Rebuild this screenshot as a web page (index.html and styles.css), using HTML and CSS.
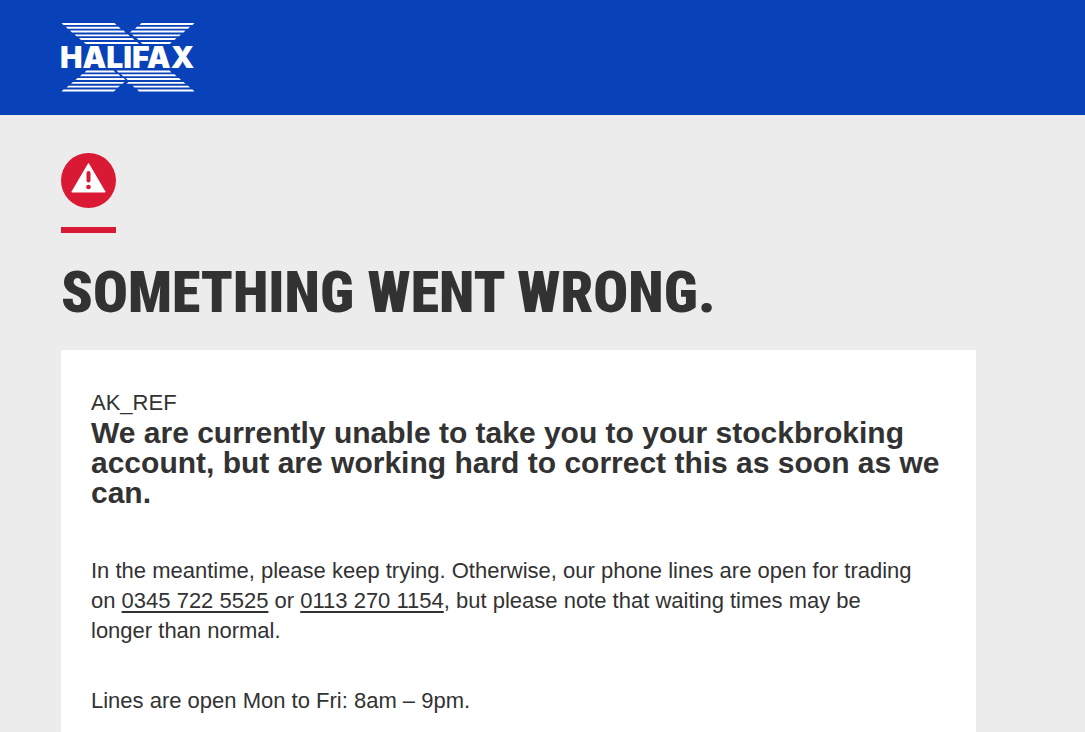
FILE: index.html
```html
<!DOCTYPE html>
<html lang="en">
<head>
    <meta charset="UTF-8">
    <meta name="viewport" content="width=device-width, initial-scale=1.0">
    <title>Halifax - Something went wrong</title>
    <link rel="stylesheet" href="styles.css">
</head>
<body>
    <header class="header">
        <svg class="logo" viewBox="0 0 134 71" role="img" aria-label="Halifax">
            <!-- upper left -->
            <path d="M0.5 1h53l2 1.9h-53zM4.7 4.8h53l2 1.9h-53zM9 8.6h53.5l2 1.9H11zM13.5 12.4H67l2 1.9H15.5zM18 16.1h53.5l2 1.9H20zM22.7 20h53.3l2 1.9H24.7z"/>
            <!-- upper right -->
            <path d="M80.5 1h53l-2 1.9h-53zM76 4.8h53l-2 1.9H74zM71 8.6h53.5l-2 1.9H69zM71 12.4h49l-2 1.9H73zM75.5 16.1h40l-2 1.9h-36zM79.5 20h31.3l-2 1.9H81.5z"/>
            <!-- lower left -->
            <path d="M25.5 48.5h27l2 1.9h-31zM21 52.3h36.5l2 1.9H19zM16.5 56.1h46l2 1.9H14.5zM12 59.9h51.5l-2 1.9H10zM7.5 63.7H59l-2 1.9H5.5zM2.5 67.6h52.5l-2 1.9H0.5z"/>
            <!-- lower right -->
            <path d="M55.5 48.5h53l2 1.9h-53zM60 52.3h53.5l2 1.9H62zM64.7 56.1H118l2 1.9H66.7zM67.5 59.9h55l2 1.9h-59zM71.5 63.7H127l2 1.9H73.5zM76 67.6h55.5l2 1.9H78z"/>
            <text class="logo-text" x="-1" y="46">HALIFAX</text>
        </svg>
    </header>

    <main class="content">
        <svg class="alert-icon" viewBox="0 0 55 55" aria-hidden="true">
            <circle cx="27.5" cy="27.5" r="27.5" fill="#da1a35"/>
            <path d="M27.5 10.5L44.2 39H10.8z" fill="#fff" stroke="#fff" stroke-width="1" stroke-linejoin="round"/>
            <path d="M27.5 20v7.5" stroke="#da1a35" stroke-width="4" stroke-linecap="round"/>
            <circle cx="27.5" cy="34" r="2.3" fill="#da1a35"/>
        </svg>
        <div class="red-line"></div>
        <h1>Something went wrong.</h1>

        <div class="panel">
            <p>AK_REF</p>
            <h2>We are currently unable to take you to your stockbroking account, but are working hard to correct this as soon as we can.</h2>
            <p class="message">In the meantime, please keep trying. Otherwise, our phone lines are open for trading on <a href="tel:03457225525">0345 722 5525</a> or <a href="tel:01132701154">0113 270 1154</a>, but please note that waiting times may be longer than normal.</p>
            <p class="message">Lines are open Mon to Fri: 8am – 9pm.</p>
        </div>
    </main>
</body>
</html>
```

FILE: styles.css
```css
* {
    box-sizing: border-box;
}
body {
    margin: 0;
    background-color: #ececec;
    color: #323233;
    font-family: "Liberation Sans", Arial, sans-serif;
    font-size: 22px;
    line-height: 30px;
}
.header {
    background-color: #0841b8;
    padding: 22px 61px;
}
.logo {
    display: block;
    width: 134px;
    height: 71px;
    fill: white;
    overflow: visible;
}
.logo-text {
    font-family: Inter, sans-serif;
    font-size: 30px;
    font-weight: 900;
}
.content {
    padding: 38px 109px 0 61px;
}
.alert-icon {
    display: block;
    width: 55px;
    height: 55px;
}
.red-line {
    width: 55px;
    height: 6px;
    margin-top: 19px;
    background-color: #da1a35;
}
h1 {
    margin: 28px 0 27px;
    color: #323233;
    font-family: "Roboto Condensed", "Arial Narrow", sans-serif;
    font-size: 58px;
    font-weight: 900;
    line-height: 62px;
    text-transform: uppercase;
}
.panel {
    background: white;
    padding: 38px 30px 40px;
}
p {
    margin: 0;
}
h2 {
    margin: 0 0 48px;
    font-size: 30px;
    line-height: 30px;
}
.message {
    margin-bottom: 40px;
    padding-right: 20px;
}
a {
    color: #323233;
    text-decoration: underline;
    text-decoration-thickness: 2px;
    text-underline-offset: 3px;
}
```
